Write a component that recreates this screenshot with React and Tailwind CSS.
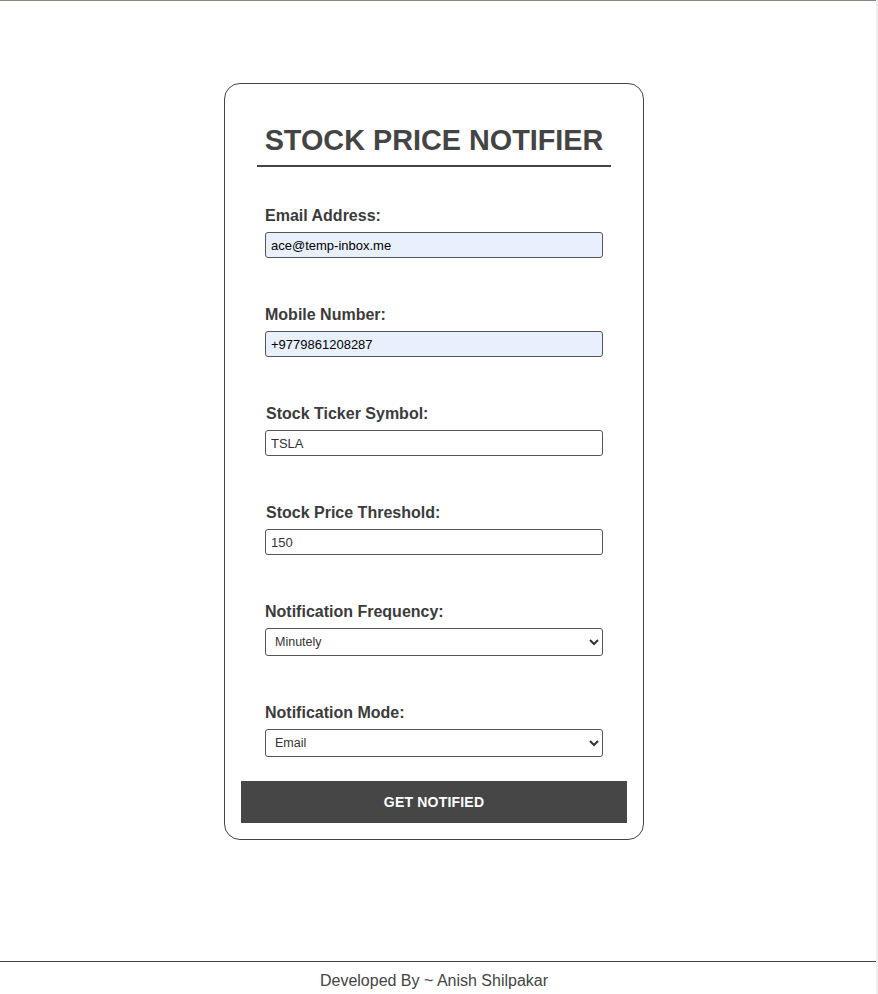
import { useState } from 'react';

function Field({ label, children, labelClass = '' }) {
    return (
        <div className="flex flex-col">
            <label className={`text-[16px] leading-[18px] font-bold text-[#3b3b3b] ${labelClass}`}>{label}</label>
            <div className="mt-[7px]">{children}</div>
        </div>
    );
}

export default function App() {
    const [email, setEmail] = useState('ace@temp-inbox.me');
    const [mobile, setMobile] = useState('+9779861208287');
    const [ticker, setTicker] = useState('TSLA');
    const [threshold, setThreshold] = useState('150');
    const [frequency, setFrequency] = useState('Minutely');
    const [mode, setMode] = useState('Email');

    const inputCls = 'block w-[338px] h-[26px] border border-[#555] rounded-[3px] px-[5px] text-[13px] outline-none';

    return (
        <div className="flex w-[878px] h-[994px] bg-white" style={{ fontFamily: '"Liberation Sans", Arial, sans-serif' }}>
            <div className="flex flex-col w-[876px] h-full border-t border-[#8c8580]">
                <main className="flex-1 pt-[82px]">
                    <div className="ml-[224px] w-[420px] border border-[#444] rounded-[16px] px-[16px] pb-[16px]">
                        <h1 className="mt-[40px] mx-[16px] border-b-2 border-[#444] pb-[9px] text-center text-[28.8px] leading-[32px] font-bold text-[#444]">
                            STOCK PRICE NOTIFIER
                        </h1>

                        <form className="flex flex-col gap-[48px] mt-[40px] px-[24px]" onSubmit={(e) => e.preventDefault()}>
                            <Field label="Email Address:">
                                <input type="email" value={email} onChange={(e) => setEmail(e.target.value)} className={`${inputCls} bg-[#e8f0fe] text-black`} />
                            </Field>
                            <Field label="Mobile Number:">
                                <input type="text" value={mobile} onChange={(e) => setMobile(e.target.value)} className={`${inputCls} bg-[#e8f0fe] text-black`} />
                            </Field>
                            <Field label="Stock Ticker Symbol:" labelClass="ml-[1px]">
                                <input type="text" value={ticker} onChange={(e) => setTicker(e.target.value)} className={`${inputCls} bg-white text-[#333]`} />
                            </Field>
                            <Field label="Stock Price Threshold:" labelClass="ml-[1px]">
                                <input type="number" value={threshold} onChange={(e) => setThreshold(e.target.value)} className={`${inputCls} bg-white text-[#333]`} />
                            </Field>
                            <Field label="Notification Frequency:">
                                <select value={frequency} onChange={(e) => setFrequency(e.target.value)} className="block w-[338px] h-[28px] border border-[#555] rounded-[3px] pl-[5px] pr-[4px] text-[12.5px] text-[#333] bg-white outline-none">
                                    <option>Minutely</option>
                                    <option>Hourly</option>
                                    <option>Daily</option>
                                </select>
                            </Field>
                            <Field label="Notification Mode:">
                                <select value={mode} onChange={(e) => setMode(e.target.value)} className="block w-[338px] h-[28px] border border-[#555] rounded-[3px] pl-[5px] pr-[4px] text-[12.5px] text-[#333] bg-white outline-none">
                                    <option>Email</option>
                                    <option>SMS</option>
                                    <option>Both</option>
                                </select>
                            </Field>
                        </form>

                        <button type="button" className="mt-[24px] block w-[386px] h-[42px] bg-[#464646] text-white text-[14px] font-bold uppercase tracking-[0.2px]">
                            Get Notified
                        </button>
                    </div>
                </main>

                <footer className="border-t border-[#444] h-[33px] pt-[10px]">
                    <p className="w-[868px] text-center text-[16px] leading-[18px] text-[#444]">Developed By ~ Anish Shilpakar</p>
                </footer>
            </div>
            <div className="w-[2px] h-full bg-[#f0f0f0]" />
        </div>
    );
}
